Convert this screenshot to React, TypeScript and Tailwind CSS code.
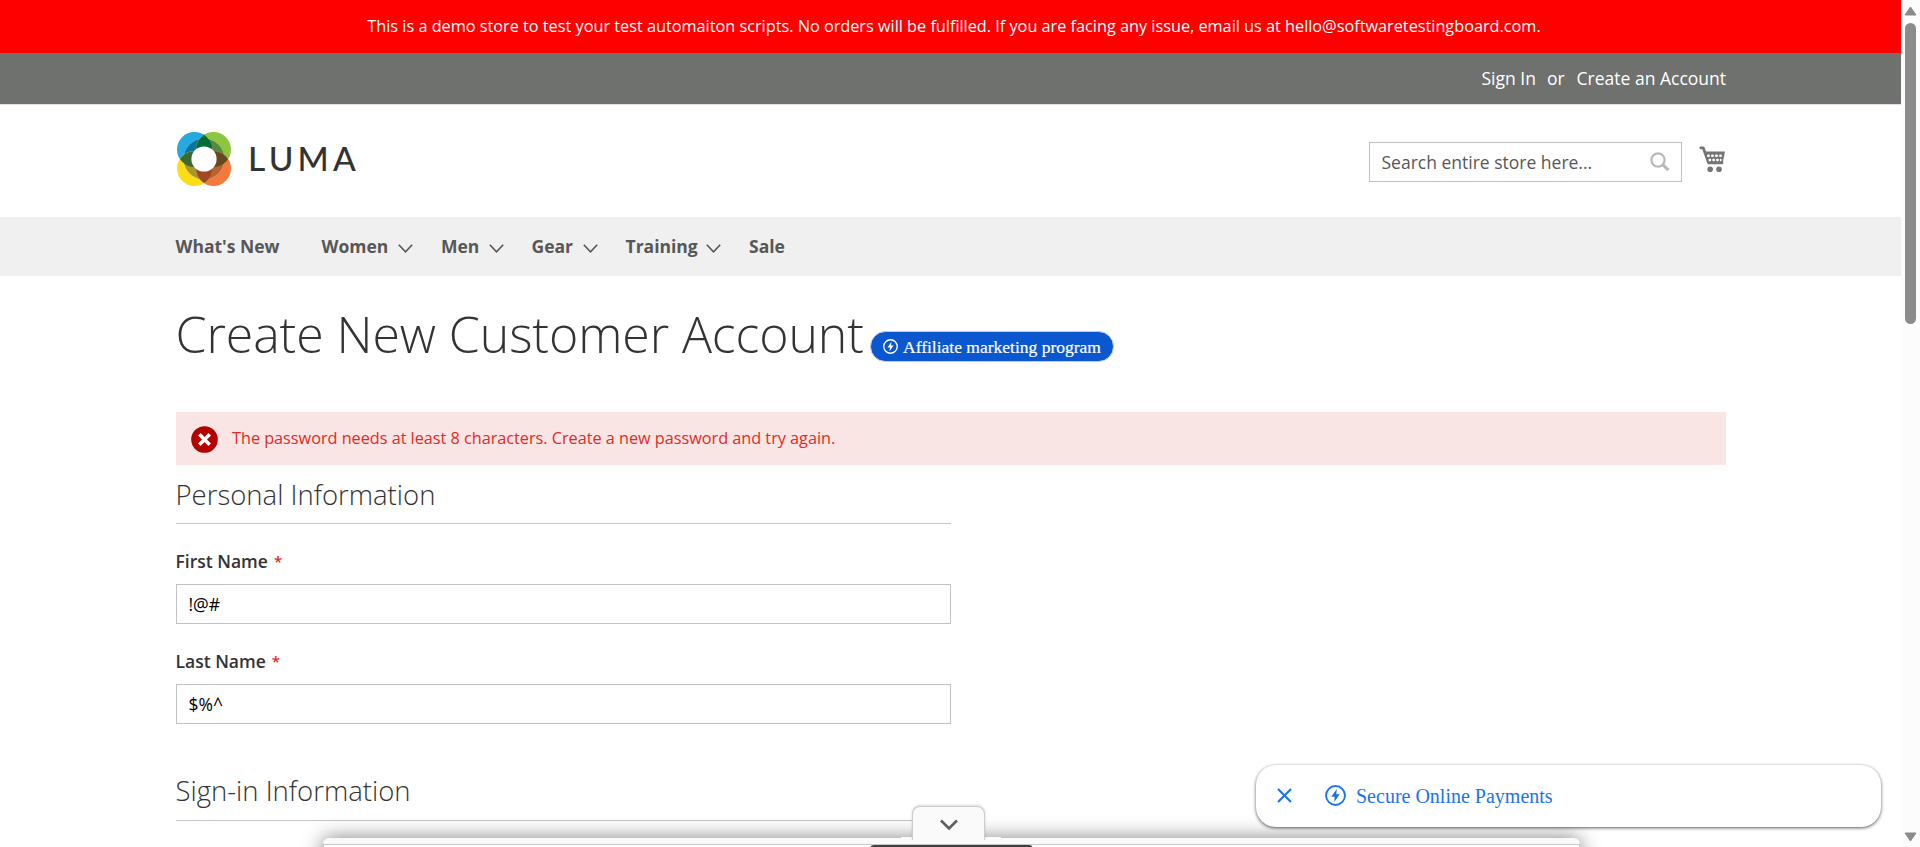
import React from "react";

const SANS = "font-['Open_Sans',sans-serif]";
const SERIF = "font-['Liberation_Serif',serif]";

function Logo() {
  return (
    <svg className="h-[54px] w-[54px] shrink-0" viewBox="0 0 54 54">
      <defs>
        <clipPath id="tl"><circle cx="17.5" cy="17.5" r="17.5" /></clipPath>
        <clipPath id="tr"><circle cx="36.5" cy="17.5" r="17.5" /></clipPath>
        <clipPath id="bl"><circle cx="17.5" cy="36.5" r="17.5" /></clipPath>
        <clipPath id="br"><circle cx="36.5" cy="36.5" r="17.5" /></clipPath>
      </defs>
      <circle cx="17.5" cy="17.5" r="17.5" fill="#26a8e0" />
      <circle cx="36.5" cy="17.5" r="17.5" fill="#8cc63f" />
      <circle cx="17.5" cy="36.5" r="17.5" fill="#fddd17" />
      <circle cx="36.5" cy="36.5" r="17.5" fill="#f37a3a" />
      <g stroke="#ffffff" strokeOpacity="0.35" strokeWidth="0.5">
        <circle cx="27" cy="27" r="20.5" fill="#0b749c" clipPath="url(#tl)" />
        <circle cx="27" cy="27" r="20.5" fill="#57893c" clipPath="url(#tr)" />
        <circle cx="27" cy="27" r="20.5" fill="#a8972f" clipPath="url(#bl)" />
        <circle cx="27" cy="27" r="20.5" fill="#b9622f" clipPath="url(#br)" />
        <g clipPath="url(#tl)"><circle cx="36.5" cy="17.5" r="17.5" fill="#006b37" /></g>
        <g clipPath="url(#tl)"><circle cx="17.5" cy="36.5" r="17.5" fill="#3a6a30" /></g>
        <g clipPath="url(#tr)"><circle cx="36.5" cy="36.5" r="17.5" fill="#654a1e" /></g>
        <g clipPath="url(#bl)"><circle cx="36.5" cy="36.5" r="17.5" fill="#a04824" /></g>
      </g>
      <circle cx="27" cy="27" r="12.6" fill="#fff" />
    </svg>
  );
}

function Bolt({ className }: { className: string }) {
  return (
    <svg className={className} viewBox="0 0 20 20" fill="none">
      <circle cx="10" cy="10" r="9" stroke="currentColor" strokeWidth="1.8" />
      <path d="M11.2 3.8 L6 11.2 H9.2 L8.8 16.2 L14 8.8 H10.8 Z" fill="currentColor" />
    </svg>
  );
}

function NavChevron() {
  return (
    <svg className="mt-[3px] h-[9px] w-[15px]" viewBox="0 0 15 9" fill="none">
      <path d="M0.8 0.8 L7.5 7.8 L14.2 0.8" stroke="#575757" strokeWidth="1.6" />
    </svg>
  );
}

const NAV = [
  { label: "What's New", width: "w-[146px]", menu: false },
  { label: "Women", width: "w-[119.5px]", menu: true },
  { label: "Men", width: "w-[90.5px]", menu: true },
  { label: "Gear", width: "w-[94px]", menu: true },
  { label: "Training", width: "w-[123.5px]", menu: true },
  { label: "Sale", width: "w-[60px]", menu: false },
];

function Field({ label, value }: { label: string; value: string }) {
  return (
    <div className="h-[100px]">
      <div className="flex h-[35px] items-start gap-[6px] text-[17.5px] leading-[25px] font-semibold text-[#333]">
        <span>{label}</span>
        <span className="text-[15px] font-semibold text-[#e02b27]">*</span>
      </div>
      <div className="flex h-[40px] items-center border border-[#c2c2c2] px-[12px] text-[17.5px] text-black">
        {value}
      </div>
    </div>
  );
}

export default function App() {
  return (
    <div className={`relative flex h-[847px] w-[1920px] overflow-hidden bg-white ${SANS}`}>
      <div className="flex w-[1901px] flex-col">
        <div className="flex h-[53px] items-center justify-center bg-[#ff0000] text-[16.25px] text-white">
          <span className="-mt-px whitespace-nowrap pl-[7px]">
            This is a demo store to test your test automaiton scripts. No orders will be fulfilled. If you are facing any issue, email us at hello@softwaretestingboard.com.
          </span>
        </div>
        <div className="flex h-[52px] items-center justify-end border-b border-[#e0e0e0] bg-[#6e716e] pr-[175px] text-[17.5px] text-white">
          <span>Sign In</span>
          <span className="ml-[11px]">or</span>
          <span className="ml-[12px]">Create an Account</span>
        </div>
        <header className="flex h-[112px] items-start px-[175.5px] pt-[27px]">
          <div className="flex items-start pl-[1.5px]">
            <Logo />
            <span className="mt-[6px] ml-[17px] font-['Lato',sans-serif] text-[33.5px] leading-[40px] font-medium tracking-[4.2px] text-[#333]">LUMA</span>
          </div>
          <div className="mt-[10px] ml-auto flex h-[40px] w-[313px] items-center border border-[#c2c2c2] pr-[11px] pl-[12px] text-[17.5px] text-[#575757]">
            <span className="flex-1">Search entire store here...</span>
            <svg className="h-[20px] w-[20px]" viewBox="0 0 20 20" fill="none" stroke="#b8b8b8">
              <circle cx="8" cy="8" r="6.6" strokeWidth="2.2" />
              <path d="M12.6 12.6 L18.4 18.2" strokeWidth="3" />
            </svg>
          </div>
          <svg className="mt-[14px] ml-[17px] h-[27px] w-[27px]" viewBox="0 0 27 27">
            <path d="M1.8 1.8 H4.2 L9.6 16.8 H23" fill="none" stroke="#757575" strokeWidth="2.8" strokeLinejoin="round" strokeLinecap="round" />
            <path d="M5.5 5.6 H26 L23.5 18 H9.5 Z" fill="#757575" />
            <g fill="#fff">
              <rect x="8.2" y="8.4" width="2.6" height="2.6" rx="0.8" /><rect x="12.2" y="8.4" width="2.6" height="2.6" rx="0.8" /><rect x="16.2" y="8.4" width="2.6" height="2.6" rx="0.8" /><rect x="20.2" y="8.4" width="2.6" height="2.6" rx="0.8" />
              <rect x="9.6" y="12.8" width="2.5" height="2.5" rx="0.8" /><rect x="13.4" y="12.8" width="2.5" height="2.5" rx="0.8" /><rect x="17.2" y="12.8" width="2.5" height="2.5" rx="0.8" /><rect x="20.8" y="12.8" width="1.8" height="2.5" rx="0.8" />
            </g>
            <circle cx="11.2" cy="23.2" r="2.8" fill="#757575" />
            <circle cx="20" cy="23.2" r="2.8" fill="#757575" />
          </svg>
        </header>
        <nav className="flex h-[59px] items-center bg-[#f0f0f0] px-[175.5px] text-[17.5px] font-bold text-[#575757]">
          {NAV.map((n) => (
            <div key={n.label} className={`flex items-center justify-between whitespace-nowrap pr-[28px] ${n.width}`}>
              <span>{n.label}</span>
              {n.menu && <NavChevron />}
            </div>
          ))}
        </nav>
        <main className="flex flex-col px-[175.5px]">
          <div className="flex h-[136px] items-start">
            <h1 className="mt-[31px] w-[687.5px] text-[50px] leading-[55px] font-light tracking-[-0.09px] whitespace-nowrap text-[#333]">Create New Customer Account</h1>
            <div className={`mt-[55px] ml-[7px] flex h-[31px] w-[244px] items-center gap-[5px] rounded-full border border-[#c4cfe4] bg-[#0b57d0] pl-[12px] text-[17.5px] whitespace-nowrap text-white ${SERIF}`}>
              <Bolt className="h-[15px] w-[15px] shrink-0" />
              <span className="pt-[2px] [-webkit-text-stroke:0.2px_white]">Affiliate marketing program</span>
            </div>
          </div>
          <div className="flex h-[53px] items-center gap-[14.5px] bg-[#fae5e5] pl-[15px] text-[16.25px] text-[#e02b27]">
            <svg className="mt-[2px] h-[27px] w-[27px]" viewBox="0 0 27 27">
              <circle cx="13.5" cy="13.5" r="13.3" fill="#b30000" />
              <path d="M8.3 8.3 L18.7 18.7 M18.7 8.3 L8.3 18.7" stroke="#fff" strokeWidth="3.6" />
            </svg>
            <span className="tracking-[-0.02px]">The password needs at least 8 characters. Create a new password and try again.</span>
          </div>
          <section className="w-[775px]">
            <h2 className="h-[59px] border-b border-[#c6c6c6] pt-[12px] text-[27.5px] leading-[36px] font-light text-[#333]">Personal Information</h2>
            <div className="pt-[25px]">
              <Field label="First Name" value="!@#" />
              <Field label="Last Name" value="$%^" />
            </div>
            <h2 className="mt-[12px] h-[60px] border-b border-[#c6c6c6] pt-[12px] text-[27.5px] leading-[36px] font-light text-[#333]">Sign-in Information</h2>
          </section>
        </main>
      </div>

      <aside className="flex w-[19px] flex-col items-center bg-[#fcfcfc]">
        <svg className="mt-[6px] h-[10px] w-[13px]" viewBox="0 0 13 10"><path d="M6.5 1 L12 9 H1 Z" fill="#8b8b8b" stroke="#8b8b8b" strokeLinejoin="round" /></svg>
        <div className="mt-[7px] h-[301px] w-[11px] rounded-full bg-[#8b8b8b]" />
        <svg className="mt-auto mb-[5px] h-[10px] w-[13px]" viewBox="0 0 13 10"><path d="M6.5 9 L12 1 H1 Z" fill="#8b8b8b" stroke="#8b8b8b" strokeLinejoin="round" /></svg>
      </aside>

      <div className="absolute top-[838px] left-[323px] h-[60px] w-[1257px] rounded-t-[6px] bg-[#fafafa] pt-[6px] shadow-[0_0_20px_rgba(0,0,0,0.5)]">
        <div className="flex h-full justify-center border border-[#c8c8c8] bg-white">
          <div className="h-[20px] w-[163px] rounded-t-[4px] bg-[#3c4043]" />
        </div>
      </div>
      <div className="absolute top-[837px] left-[901px] h-[2px] w-[100px] bg-[#fafafa]" />
      <div className="absolute top-[806px] left-[912px] flex h-[34px] w-[73px] justify-center rounded-t-[8px] border border-b-0 border-[#cccccc] bg-[#fafafa] pt-[12px] shadow-[0_-1px_3px_rgba(0,0,0,0.15)]">
        <svg className="h-[12px] w-[18px]" viewBox="0 0 18 12" fill="none"><path d="M1 1.5 L9 9.5 L17 1.5" stroke="#5f5f5f" strokeWidth="2.6" /></svg>
      </div>
      <div className="absolute top-[838px] left-[913px] h-[6px] w-[71px] bg-[#fafafa]" />
      <div className={`absolute top-[765px] left-[1256px] flex h-[62px] w-[625px] items-center rounded-[20px] bg-white pb-px pl-[21px] text-[20px] text-[#1a73e8] shadow-[0_1px_3px_rgba(0,0,0,0.5),0_1px_4px_rgba(0,0,0,0.2)] ${SERIF}`}>
        <svg className="h-[15px] w-[15px]" viewBox="0 0 15 15" fill="none"><path d="M1 1 L14 14 M14 1 L1 14" stroke="currentColor" strokeWidth="2.1" /></svg>
        <Bolt className="ml-[33px] h-[21px] w-[21px]" />
        <span className="ml-[10px]">Secure Online Payments</span>
      </div>
    </div>
  );
}
